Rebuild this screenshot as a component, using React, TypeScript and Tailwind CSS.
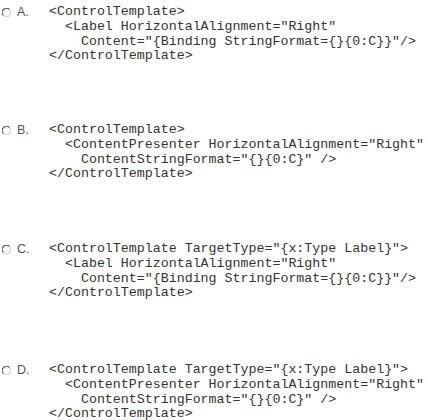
import React from 'react';

const options = [
  {
    label: 'A.',
    gap: 'mt-0',
    lines: [
      '<ControlTemplate>',
      '  <Label HorizontalAlignment="Right"',
      '    Content="{Binding StringFormat={}{0:C}}"/>',
      '</ControlTemplate>',
    ],
  },
  {
    label: 'B.',
    gap: 'mt-[59px]',
    lines: [
      '<ControlTemplate>',
      '  <ContentPresenter HorizontalAlignment="Right"',
      '    ContentStringFormat="{}{0:C}" />',
      '</ControlTemplate>',
    ],
  },
  {
    label: 'C.',
    gap: 'mt-[60px]',
    lines: [
      '<ControlTemplate TargetType="{x:Type Label}">',
      '  <Label HorizontalAlignment="Right"',
      '    Content="{Binding StringFormat={}{0:C}}"/>',
      '</ControlTemplate>',
    ],
  },
  {
    label: 'D.',
    gap: 'mt-[62px]',
    lines: [
      '<ControlTemplate TargetType="{x:Type Label}">',
      '  <ContentPresenter HorizontalAlignment="Right"',
      '    ContentStringFormat="{}{0:C}" />',
      '</ControlTemplate>',
    ],
  },
];

function Radio() {
  return (
    <svg width="9" height="9" viewBox="0 0 9 9" className="shrink-0">
      <path d="M7.5 1.5 A4 4 0 0 0 1.5 7.5" fill="none" stroke="#555" strokeWidth="1.2" />
      <path d="M1.5 7.5 A4 4 0 0 0 7.5 1.5" fill="none" stroke="#d4d4d4" strokeWidth="1.2" />
    </svg>
  );
}

export default function App() {
  return (
    <div className="w-[428px] h-[420px] bg-white overflow-hidden pt-[5px] flex flex-col">
      {options.map((opt) => (
        <div key={opt.label} className={`flex ${opt.gap}`}>
          <div className="w-[49px] shrink-0 flex items-center gap-[6px] pl-[2px] h-[15px]">
            <Radio />
            <span className="text-[12.5px] text-[#555] font-['Liberation_Sans',Arial,sans-serif]">{opt.label}</span>
          </div>
          <pre className="m-0 text-[13.3px] leading-[14.75px] text-[#333] font-['Liberation_Mono','Courier_New',monospace]">
            {opt.lines.join('\n')}
          </pre>
        </div>
      ))}
    </div>
  );
}
